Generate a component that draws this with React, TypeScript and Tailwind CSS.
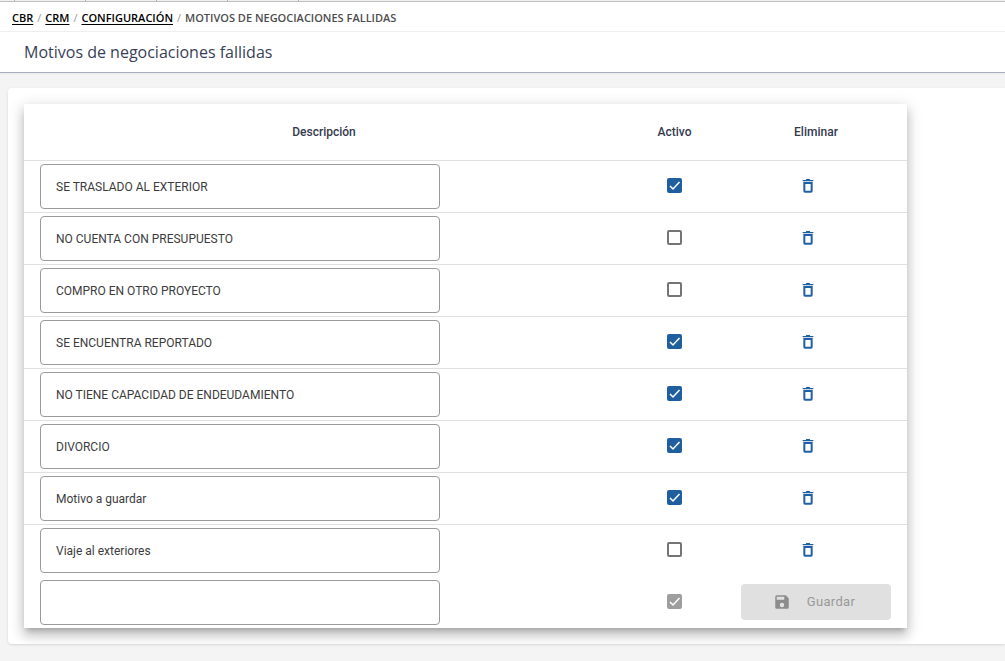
import { useState } from 'react'

interface Reason {
  id: number
  description: string
  active: boolean
}

const initialReasons: Reason[] = [
  { id: 1, description: 'SE TRASLADO AL EXTERIOR', active: true },
  { id: 2, description: 'NO CUENTA CON PRESUPUESTO', active: false },
  { id: 3, description: 'COMPRO EN OTRO PROYECTO', active: false },
  { id: 4, description: 'SE ENCUENTRA REPORTADO', active: true },
  { id: 5, description: 'NO TIENE CAPACIDAD DE ENDEUDAMIENTO', active: true },
  { id: 6, description: 'DIVORCIO', active: true },
  { id: 7, description: 'Motivo a guardar', active: true },
  { id: 8, description: 'Viaje al exteriores', active: false },
]

const crumbs = ['CBR', 'CRM', 'CONFIGURACIÓN']

function TrashIcon() {
  return (
    <svg viewBox="0 0 24 24" className="size-4 fill-[#1f5fa6]" aria-hidden="true">
      <path d="M5 6v13.5A2.5 2.5 0 0 0 7.500 22h9a2.500 2.500 0 0 0 2.500-2.500V6H5zm3 3h8v10H8V9zM15.500 3l-1-1.500h-5L8.500 3H4v2h16V3h-4.500z" />
    </svg>
  )
}

function SaveIcon() {
  return (
    <svg viewBox="0 0 24 24" className="size-[18px] fill-[#8c8c8c]" aria-hidden="true">
      <path d="M17 3H5a2 2 0 0 0-2 2v14a2 2 0 0 0 2 2h14a2 2 0 0 0 2-2V7l-4-4zm-5 16a3 3 0 1 1 0-6 3 3 0 0 1 0 6zm3-10H5V5h10v4z" />
    </svg>
  )
}

interface CheckboxProps {
  label: string
  checked: boolean
  disabled?: boolean
  onChange?: (checked: boolean) => void
}

function Checkbox({ label, checked, disabled, onChange }: CheckboxProps) {
  return (
    <span className="mx-auto mb-0.5 grid size-[15px]">
      <input
        type="checkbox"
        aria-label={label}
        checked={checked}
        disabled={disabled}
        onChange={(event) => onChange?.(event.target.checked)}
        className="peer col-start-1 row-start-1 size-[15px] appearance-none rounded-xs border-2 border-[#757575] checked:border-[#1f5fa0] checked:bg-[#1f5fa0] disabled:border-[#9e9e9e] disabled:bg-[#9e9e9e]"
      />
      <svg
        viewBox="0 0 15 15"
        className="pointer-events-none col-start-1 row-start-1 hidden size-[15px] fill-none stroke-white peer-checked:block"
        aria-hidden="true"
      >
        <path d="M3 8l3 3 6.500-7" strokeWidth="1.500" />
      </svg>
    </span>
  )
}

interface DescriptionInputProps {
  label: string
  value: string
  onChange: (value: string) => void
}

function DescriptionInput({ label, value, onChange }: DescriptionInputProps) {
  return (
    <input
      type="text"
      aria-label={label}
      value={value}
      onChange={(event) => onChange(event.target.value)}
      className="block h-[45px] w-full max-w-[400px] rounded border border-[#9a9a9a] px-[15px] pt-0.5 text-xs text-[#3c3c3c] outline-none"
    />
  )
}

export default function App() {
  const [reasons, setReasons] = useState(initialReasons)
  const [draft, setDraft] = useState('')

  const update = (id: number, changes: Partial<Reason>) =>
    setReasons(reasons.map((reason) => (reason.id === id ? { ...reason, ...changes } : reason)))

  return (
    <div className="flex min-h-screen flex-col bg-[#f4f4f4] font-['Roboto',sans-serif]">
      {/* bottom edge of the tab strip */}
      <div className="flex h-0.5 border-b border-[#c0c0c0] bg-[#f0f0f0] pl-3.5" aria-hidden="true">
        {[1, 2, 3, 4, 5].map((tab) => (
          <span key={tab} className="w-[71px] border-l border-[#b0b0b0]" />
        ))}
      </div>
      <header className="border-b border-b-[#a9adc0] bg-white shadow-xs">
        <nav
          aria-label="Ruta"
          className="flex h-[30px] items-center gap-1 border-b border-[#eeeeee] px-3 pt-1 font-['Open_Sans',sans-serif] text-[11px] font-semibold text-[#4d4d4d]"
        >
          {crumbs.map((crumb) => (
            <span key={crumb} className="flex gap-1">
              <a href="#" className="text-black underline underline-offset-2">
                {crumb}
              </a>
              <span className="font-normal text-[#999999]">/</span>
            </span>
          ))}
          <span aria-current="page">MOTIVOS DE NEGOCIACIONES FALLIDAS</span>
        </nav>
        <h1 className="flex h-10 items-center px-6 font-['Open_Sans',sans-serif] text-base text-[#3a3f58]">
          Motivos de negociaciones fallidas
        </h1>
      </header>

      <main className="mt-[15px] mb-4 ml-2 overflow-hidden rounded-l bg-white p-4 shadow-sm">
        <table className="w-full max-w-[883px] table-fixed border-collapse bg-white shadow-[0_5px_5px_-3px_rgba(0,0,0,0.2),0_8px_10px_1px_rgba(0,0,0,0.14),0_3px_14px_2px_rgba(0,0,0,0.12)]">
          <thead>
            <tr className="h-14 border-b border-[#e0e0e0] text-xs text-[#343a4f]">
              <th className="font-medium">Descripción</th>
              <th className="w-[101px] font-medium">Activo</th>
              <th className="w-[182px] font-medium">Eliminar</th>
            </tr>
          </thead>
          <tbody>
            {reasons.map((reason) => (
              <tr key={reason.id} className="h-[52px] border-b border-[#e0e0e0] nth-8:border-b-0">
                <td className="px-4">
                  <DescriptionInput
                    label={`Descripción ${reason.id}`}
                    value={reason.description}
                    onChange={(description) => update(reason.id, { description })}
                  />
                </td>
                <td>
                  <Checkbox
                    label={`Activo ${reason.id}`}
                    checked={reason.active}
                    onChange={(active) => update(reason.id, { active })}
                  />
                </td>
                <td className="px-4">
                  <button
                    type="button"
                    aria-label={`Eliminar ${reason.description}`}
                    onClick={() => setReasons(reasons.filter((item) => item.id !== reason.id))}
                    className="mx-auto block pr-4"
                  >
                    <TrashIcon />
                  </button>
                </td>
              </tr>
            ))}
            <tr className="h-[52px]">
              <td className="px-4">
                <DescriptionInput label="Nueva descripción" value={draft} onChange={setDraft} />
              </td>
              <td>
                <Checkbox label="Activo" checked disabled />
              </td>
              <td className="px-4">
                <button
                  type="button"
                  disabled
                  className="flex h-9 w-full items-center justify-center gap-4 rounded bg-[#e0e0e0] pr-1 text-[13px] tracking-wide text-[#999999]"
                >
                  <SaveIcon />
                  Guardar
                </button>
              </td>
            </tr>
          </tbody>
        </table>
      </main>
    </div>
  )
}
